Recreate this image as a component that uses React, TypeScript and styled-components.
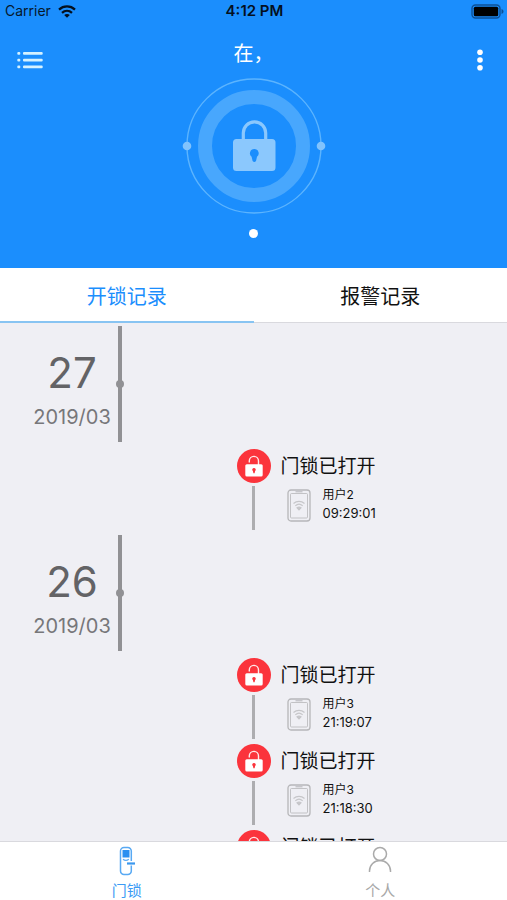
import React, { useState } from "react";
import styled, { createGlobalStyle } from "styled-components";

const color = {
  brand: "#1b8efd",
  canvas: "#efeff4",
  underline: "#88c4f2",
  hairline: "#d9d9de",
  axis: "#919194",
  alert: "#fb343c",
};

const GlobalStyle = createGlobalStyle`
  *, *::before, *::after { box-sizing: border-box; }
  body {
    margin: 0;
    font-family: Inter, "Noto Sans CJK SC", sans-serif;
    color: #111;
    background: ${color.canvas};
  }
  button { font: inherit; color: inherit; border: 0; padding: 0; background: none; cursor: pointer; }
  ol { list-style: none; margin: 0; padding: 0; }
  h1, h2, h3, p { margin: 0; font-weight: 400; }
  svg { display: block; }
`;

const Screen = styled.div`
  display: flex;
  flex-direction: column;
  height: 100vh;
`;

const Hero = styled.header`
  flex: none;
  display: flex;
  flex-direction: column;
  padding-bottom: 30px;
  background: ${color.brand};
`;

const StatusBar = styled.div`
  display: grid;
  grid-template-columns: 1fr auto 1fr;
  align-items: center;
  height: 22px;
  padding: 0 3px 0 5px;
  line-height: 22px;
  color: #06182c;
`;

const Carrier = styled.span`
  display: flex;
  align-items: center;
  gap: 7px;
  font-size: 14px;
`;

const Clock = styled.time`
  font-weight: 600;
  font-size: 15px;
  color: #04101f;
`;

const BatterySlot = styled.span`
  justify-self: end;
`;

const NavBar = styled.div`
  display: grid;
  grid-template-columns: 60px 1fr 60px;
  align-items: center;
  height: 56px;
  padding-top: 20px;
`;

const NavTitle = styled.h1`
  padding-bottom: 12px;
  text-align: center;
  font-size: 20px;
  line-height: 24px;
  color: #fff;
`;

const NavButton = styled.button<{ $end?: boolean }>`
  display: flex;
  align-items: center;
  justify-content: ${(p) => (p.$end ? "flex-end" : "flex-start")};
  height: 36px;
  padding: 0 ${(p) => (p.$end ? "24px" : "16px")};
`;

const Emblem = styled.button`
  align-self: center;
`;

const PageDot = styled.span`
  align-self: center;
  width: 9px;
  height: 9px;
  margin-top: 15px;
  border-radius: 50%;
  background: #fff;
`;

const Tabs = styled.div`
  flex: none;
  display: grid;
  grid-template-columns: 1fr 1fr;
  height: 55px;
  background: #fff;
`;

const Tab = styled.button<{ $active: boolean }>`
  padding-top: 2px;
  font-size: 20px;
  line-height: 28px;
  color: ${(p) => (p.$active ? color.brand : "#111")};
  box-shadow: inset 0 ${(p) => (p.$active ? `-2px ${color.underline}` : `-1px ${color.hairline}`)};
`;

const Timeline = styled.main`
  flex: 1;
  min-height: 0;
  overflow-y: auto;
  scrollbar-width: none;
`;

const DayHeader = styled.div`
  display: flex;
  width: 122px;
  height: 123px;
  padding: 3px 0 4px;
`;

const DayDate = styled.h2`
  flex: 1;
  display: flex;
  flex-direction: column;
  align-items: center;
  padding: 19px 0 0 26px;
  color: #636366;
`;

const DayNumber = styled.span`
  font-size: 42px;
  line-height: 56px;
`;

const DayMonth = styled.span`
  font-size: 20px;
  line-height: 32px;
  color: #77777a;
`;

const DayAxis = styled.span`
  display: flex;
  align-items: center;
  justify-content: center;
  width: 4px;
  background: ${color.axis};

  &::after {
    content: "";
    flex: none;
    width: 8px;
    height: 8px;
    border-radius: 50%;
    background: ${color.axis};
  }
`;

const Entry = styled.li`
  display: grid;
  grid-template-columns: 34px 1fr;
  column-gap: 10px;
  height: 86px;
  padding: 3px 0 2px;
  margin-left: calc(50% - 17px);
`;

const EntryMarker = styled.div`
  display: flex;
  flex-direction: column;
  align-items: center;
  gap: 3px;
`;

const EntryBadge = styled.span`
  display: flex;
  align-items: center;
  justify-content: center;
  width: 34px;
  height: 34px;
  border-radius: 50%;
  background: ${color.alert};
`;

const EntryLine = styled.span`
  flex: 1;
  width: 3px;
  background: #adadb0;
`;

const EntryTitle = styled.h3`
  font-size: 19px;
  line-height: 36px;
`;

const EntryDetail = styled.div`
  display: flex;
  align-items: center;
  gap: 12px;
  height: 40px;
  padding-left: 6px;
`;

const EntryText = styled.p`
  padding-bottom: 2px;
  font-size: 12px;
  line-height: 18px;
`;

const EntryTime = styled.time`
  display: block;
  font-size: 13px;
`;

const BottomBar = styled.nav`
  flex: none;
  display: grid;
  grid-template-columns: 1fr 1fr;
  height: 59px;
  border-top: 1px solid ${color.hairline};
  background: #fff;
`;

const BottomItem = styled.button<{ $active: boolean }>`
  display: flex;
  flex-direction: column;
  align-items: center;
  gap: 6px;
  padding-top: 4px;
  font-size: 15px;
  line-height: 18px;
  color: ${(p) => (p.$active ? "#3b9bf5" : "#a8a8a8")};
`;

const WifiIcon = () => (
  <svg width="18" height="13" viewBox="0 0 18 13" fill="none" stroke="#04101f" strokeWidth="2.3" aria-hidden="true">
    <path d="M1 4.6C5.6.4 12.4.4 17 4.6" />
    <path d="M4 7.8c2.9-2.6 7.1-2.6 10 0" />
    <path d="M9 12.8 6.2 10c1.6-1.4 4-1.4 5.6 0z" fill="#04101f" stroke="none" />
  </svg>
);

const BatteryIcon = () => (
  <svg width="33" height="15" viewBox="0 0 33 15" role="img" aria-label="Battery full">
    <rect x="1" y="1" width="28" height="13" rx="3.5" fill="none" stroke="#0d5096" strokeWidth="1.4" />
    <rect x="2.8" y="2.8" width="24.4" height="9.4" rx="1.5" fill="#000" />
    <path d="M30.5 5v5c1.4-.4 2-1.3 2-2.5s-.6-2.1-2-2.5z" fill="#0d5096" />
  </svg>
);

const MenuIcon = () => (
  <svg width="28" height="20" viewBox="0 0 28 20" fill="#d5f2ff" aria-hidden="true">
    {[2, 8.7, 15.4].map((y) => (
      <g key={y}>
        <rect x="1.3" y={y} width="3" height="2.8" rx="1" />
        <rect x="7" y={y} width="19.7" height="2.8" rx="1" />
      </g>
    ))}
  </svg>
);

const MoreIcon = () => (
  <svg width="6" height="24" viewBox="0 0 6 24" fill="#fff" aria-hidden="true">
    <circle cx="3" cy="4.3" r="2.8" />
    <circle cx="3" cy="12" r="2.8" />
    <circle cx="3" cy="19.7" r="2.8" />
  </svg>
);

const LockEmblem = () => (
  <svg width="144" height="136" viewBox="0 0 144 136" aria-hidden="true">
    <circle cx="72" cy="68" r="67" fill="none" stroke="#5cb4fe" strokeWidth="1.4" />
    <circle cx="72" cy="68" r="49" fill="none" stroke="#48a7fd" strokeWidth="14" />
    <circle cx="5" cy="68" r="4.3" fill="#81c3fd" />
    <circle cx="139" cy="68" r="4.3" fill="#81c3fd" />
    <path d="M61.3 62V55a11.2 11.2 0 0 1 22.4 0v7" fill="none" stroke="#8bc8fd" strokeWidth="3.2" />
    <path
      fillRule="evenodd"
      fill="#8bc8fd"
      d="M54.5 61h35.5a3.5 3.5 0 0 1 3.5 3.5v25a3.5 3.5 0 0 1-3.5 3.5h-35.5a3.5 3.5 0 0 1-3.5-3.5v-25a3.5 3.5 0 0 1 3.5-3.5zM72.3 71a4.3 4.3 0 0 0-2.7 7.7l1 4.3q1.7 1.9 3.4 0l1-4.3a4.3 4.3 0 0 0-2.7-7.7z"
    />
  </svg>
);

const OpenLockIcon = () => (
  <svg width="20" height="24" viewBox="0 0 20 24" aria-hidden="true">
    <path d="M5.3 8.5V7a4.6 4.6 0 0 1 9.2 0v4" fill="none" stroke="#ffe9ea" strokeWidth="1.4" />
    <rect x="1.3" y="10.3" width="17.4" height="12.2" rx="1.5" fill="#fff" />
    <path d="M10 14a1.7 1.7 0 0 0-1.1 3l.5 2.3h1.2l.5-2.3A1.7 1.7 0 0 0 10 14z" fill={color.alert} />
  </svg>
);

const PhoneIcon = () => (
  <svg width="24" height="33" viewBox="0 0 24 33" fill="none" stroke="#b6b6b9" aria-hidden="true">
    <rect x="1" y="1" width="22" height="31" rx="3" strokeWidth="1.3" />
    <rect x="3.5" y="4.5" width="17" height="24.5" rx="1" strokeWidth=".8" />
    <path d="M8.5 2.8h7" />
    <g stroke="#c6c6c9" strokeWidth="1.1">
      <path d="M6.5 14.5c3.2-2.9 7.8-2.9 11 0" />
      <path d="M8.3 16.8c2.2-2 5.2-2 7.4 0" />
      <path d="M10 18.8c1.3-1 2.7-1 4 0L12 21z" fill="#c6c6c9" />
    </g>
  </svg>
);

const DoorLockIcon = () => (
  <svg width="18" height="30" viewBox="0 0 18 30" fill="none" stroke="#58a9f3" aria-hidden="true">
    <path
      d="M13.3 15V5a3.5 3.5 0 0 0-3.5-3.5H6A3.5 3.5 0 0 0 2.500 5v20A3.5 3.5 0 0 0 6 28.500h3.800a3.5 3.5 0 0 0 3.500-3.500v-5.500"
      strokeWidth="1.5"
    />
    <rect x="4.500" y="4" width="7" height="7.500" fill="#2a8ff0" stroke="none" />
    <path d="M5 13.300q2.900 2.200 5.800 0" strokeWidth="1.300" />
    <path d="M9 17.500h8" stroke="#3c98ee" strokeWidth="2.200" />
  </svg>
);

const PersonIcon = () => (
  <svg width="26" height="30" viewBox="0 0 26 30" fill="none" stroke="#aaa" strokeWidth="1.5" aria-hidden="true">
    <circle cx="13" cy="8" r="6.5" />
    <path d="M2.5 26v-1a10.5 10.5 0 0 1 21 0v1" />
  </svg>
);

type Unlock = { user: string; time: string };
type Day = { day: string; month: string; unlocks: Unlock[] };

const days: Day[] = [
  { day: "27", month: "2019/03", unlocks: [{ user: "用户2", time: "09:29:01" }] },
  {
    day: "26",
    month: "2019/03",
    unlocks: [
      { user: "用户3", time: "21:19:07" },
      { user: "用户3", time: "21:18:30" },
      { user: "用户3", time: "21:18:02" },
    ],
  },
];

const recordTabs = ["开锁记录", "报警记录"];

const sections = [
  { label: "门锁", Icon: DoorLockIcon },
  { label: "个人", Icon: PersonIcon },
];

function UnlockEntry({ user, time }: Unlock) {
  return (
    <Entry>
      <EntryMarker>
        <EntryBadge>
          <OpenLockIcon />
        </EntryBadge>
        <EntryLine />
      </EntryMarker>
      <div>
        <EntryTitle>门锁已打开</EntryTitle>
        <EntryDetail>
          <PhoneIcon />
          <EntryText>
            {user}
            <EntryTime>{time}</EntryTime>
          </EntryText>
        </EntryDetail>
      </div>
    </Entry>
  );
}

export default function App() {
  const [tab, setTab] = useState(0);
  const [section, setSection] = useState(0);

  return (
    <Screen>
      <GlobalStyle />
      <Hero>
        <StatusBar>
          <Carrier>
            Carrier
            <WifiIcon />
          </Carrier>
          <Clock>4:12 PM</Clock>
          <BatterySlot>
            <BatteryIcon />
          </BatterySlot>
        </StatusBar>
        <NavBar>
          <NavButton type="button" aria-label="菜单">
            <MenuIcon />
          </NavButton>
          <NavTitle>在，</NavTitle>
          <NavButton type="button" aria-label="更多" $end>
            <MoreIcon />
          </NavButton>
        </NavBar>
        <Emblem type="button" aria-label="开锁">
          <LockEmblem />
        </Emblem>
        <PageDot />
      </Hero>
      <Tabs role="tablist">
        {recordTabs.map((label, i) => (
          <Tab key={label} type="button" role="tab" aria-selected={tab === i} $active={tab === i} onClick={() => setTab(i)}>
            {label}
          </Tab>
        ))}
      </Tabs>
      <Timeline>
        {days.map(({ day, month, unlocks }) => (
          <section key={day}>
            <DayHeader>
              <DayDate>
                <DayNumber>{day}</DayNumber>
                <DayMonth>{month}</DayMonth>
              </DayDate>
              <DayAxis />
            </DayHeader>
            <ol>
              {unlocks.map((unlock) => (
                <UnlockEntry key={unlock.time} {...unlock} />
              ))}
            </ol>
          </section>
        ))}
      </Timeline>
      <BottomBar>
        {sections.map(({ label, Icon }, i) => (
          <BottomItem key={label} type="button" $active={section === i} onClick={() => setSection(i)}>
            <Icon />
            {label}
          </BottomItem>
        ))}
      </BottomBar>
    </Screen>
  );
}
